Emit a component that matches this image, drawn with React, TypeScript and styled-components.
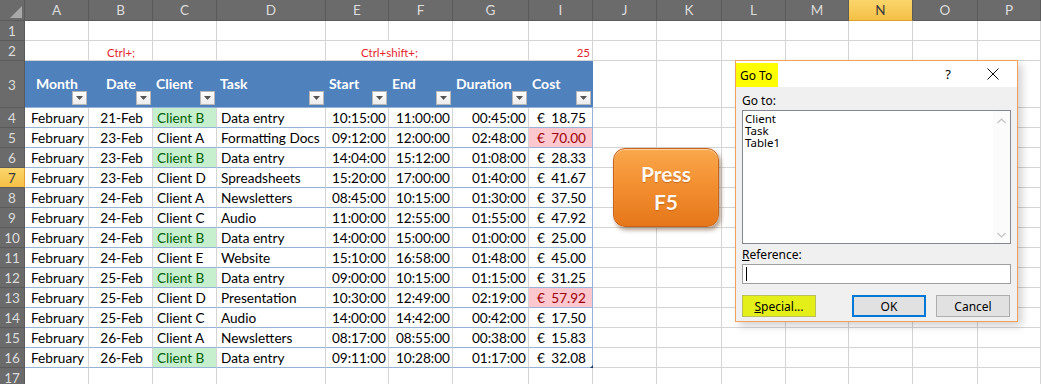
import styled, { createGlobalStyle } from "styled-components";

const GlobalStyle = createGlobalStyle`
  html, body {
    margin: 0;
    padding: 0;
    background: #ffffff;
  }
  * {
    box-sizing: border-box;
  }
`;

const GRID = "#d4d4d4";
const TABLE_LINE = "#95b3d7";
const TABLE_BLUE = "#4f81bd";

const COLS = ["A", "B", "C", "D", "E", "F", "G", "I", "J", "K", "L", "M", "N", "O", "P"];

type Row = {
  month: string;
  date: string;
  client: string;
  task: string;
  start: string;
  end: string;
  duration: string;
  cost: string;
  high?: boolean;
};

const rows: Row[] = [
  { month: "February", date: "21-Feb", client: "Client B", task: "Data entry", start: "10:15:00", end: "11:00:00", duration: "00:45:00", cost: "18.75" },
  { month: "February", date: "23-Feb", client: "Client A", task: "Formatting Docs", start: "09:12:00", end: "12:00:00", duration: "02:48:00", cost: "70.00", high: true },
  { month: "February", date: "23-Feb", client: "Client B", task: "Data entry", start: "14:04:00", end: "15:12:00", duration: "01:08:00", cost: "28.33" },
  { month: "February", date: "23-Feb", client: "Client D", task: "Spreadsheets", start: "15:20:00", end: "17:00:00", duration: "01:40:00", cost: "41.67" },
  { month: "February", date: "24-Feb", client: "Client A", task: "Newsletters", start: "08:45:00", end: "10:15:00", duration: "01:30:00", cost: "37.50" },
  { month: "February", date: "24-Feb", client: "Client C", task: "Audio", start: "11:00:00", end: "12:55:00", duration: "01:55:00", cost: "47.92" },
  { month: "February", date: "24-Feb", client: "Client B", task: "Data entry", start: "14:00:00", end: "15:00:00", duration: "01:00:00", cost: "25.00" },
  { month: "February", date: "24-Feb", client: "Client E", task: "Website", start: "15:10:00", end: "16:58:00", duration: "01:48:00", cost: "45.00" },
  { month: "February", date: "25-Feb", client: "Client B", task: "Data entry", start: "09:00:00", end: "10:15:00", duration: "01:15:00", cost: "31.25" },
  { month: "February", date: "25-Feb", client: "Client D", task: "Presentation", start: "10:30:00", end: "12:49:00", duration: "02:19:00", cost: "57.92", high: true },
  { month: "February", date: "25-Feb", client: "Client C", task: "Audio", start: "14:00:00", end: "14:42:00", duration: "00:42:00", cost: "17.50" },
  { month: "February", date: "26-Feb", client: "Client A", task: "Newsletters", start: "08:17:00", end: "08:55:00", duration: "00:38:00", cost: "15.83" },
  { month: "February", date: "26-Feb", client: "Client B", task: "Data entry", start: "09:11:00", end: "10:28:00", duration: "01:17:00", cost: "32.08" },
];

const headers = [
  { label: "Month", center: true },
  { label: "Date", center: true },
  { label: "Client" },
  { label: "Task" },
  { label: "Start" },
  { label: "End" },
  { label: "Duration" },
  { label: "Cost" },
];

export default function App() {
  return (
    <>
      <GlobalStyle />
      <Page>
        <Sheet>
          <Corner>
            <svg width="12" height="12" viewBox="0 0 12 12">
              <polygon points="12,0 12,12 0,12" fill="#a8a8a8" />
            </svg>
          </Corner>
          {COLS.map((c) => (
            <ColHead key={c} $active={c === "N"}>
              {c}
            </ColHead>
          ))}

          {/* row 1 */}
          <RowHead>1</RowHead>
          {COLS.map((c) => (
            <Cell key={"r1" + c} />
          ))}

          {/* row 2 */}
          <RowHead>2</RowHead>
          <Cell />
          <Cell $align="center">
            <Note>Ctrl+;</Note>
          </Cell>
          <Cell />
          <Cell />
          <Cell $align="center" $span={2}>
            <Note>Ctrl+shift+;</Note>
          </Cell>
          <Cell />
          <Cell $align="right">
            <Note>25</Note>
          </Cell>
          {COLS.slice(8).map((c) => (
            <Cell key={"r2" + c} />
          ))}

          {/* row 3: table header */}
          <RowHead>3</RowHead>
          {headers.map((h) => (
            <HeadCell key={h.label} $center={h.center}>
              <HeadLabel>{h.label}</HeadLabel>
              <FilterButton>
                <svg width="7" height="4" viewBox="0 0 7 4">
                  <polygon points="0,0 7,0 3.5,4" fill="#555" />
                </svg>
              </FilterButton>
            </HeadCell>
          ))}
          {COLS.slice(8).map((c) => (
            <Cell key={"r3" + c} />
          ))}

          {/* data rows */}
          {rows.map((r, i) => {
            const n = i + 4;
            const clientB = r.client === "Client B";
            return [
              <RowHead key={"h" + n} $active={n === 7}>
                {n}
              </RowHead>,
              <Cell key={"a" + n} $table $pl={6}>{r.month}</Cell>,
              <Cell key={"b" + n} $table $align="right" $pr={9}>{r.date}</Cell>,
              <Cell
                key={"c" + n}
                $table
                $pl={4}
                $fill={clientB ? "#c6efce" : undefined}
                $ink={clientB ? "#006100" : undefined}
              >
                {r.client}
              </Cell>,
              <Cell key={"d" + n} $table $pl={4}>{r.task}</Cell>,
              <Cell key={"e" + n} $table $align="right">{r.start}</Cell>,
              <Cell key={"f" + n} $table $align="right">{r.end}</Cell>,
              <Cell key={"g" + n} $table $align="right">{r.duration}</Cell>,
              <Cell
                key={"i" + n}
                $table
                $edge
                $pl={8}
                $pr={6}
                $fill={r.high ? "#ffc7ce" : undefined}
                $ink={r.high ? "#9c0006" : undefined}
              >
                <Money>
                  <span>€</span>
                  <span>{r.cost}</span>
                </Money>
                {n === 16 && <ResizeGrip />}
              </Cell>,
              ...COLS.slice(8).map((c) => <Cell key={c + n} />),
            ];
          })}

          {/* row 17 */}
          <RowHead>17</RowHead>
          {COLS.map((c) => (
            <Cell key={"r17" + c} />
          ))}
        </Sheet>

        <PressButton>
          Press
          <br />
          F5
        </PressButton>

        <Dialog>
          <TitleBar>
            <Title>Go To</Title>
            <TitleTools>
              <span>?</span>
              <svg width="12" height="12" viewBox="0 0 12 12">
                <path d="M0.5 0.5 L11.5 11.5 M11.5 0.5 L0.5 11.5" stroke="#111" strokeWidth="1" />
              </svg>
            </TitleTools>
          </TitleBar>
          <DialogBody>
            <FieldLabel>Go to:</FieldLabel>
            <ListBox>
              <ListItems>
                <ListItem>Client</ListItem>
                <ListItem>Task</ListItem>
                <ListItem>Table1</ListItem>
              </ListItems>
              <ScrollTrack>
                <svg width="9" height="6" viewBox="0 0 9 6">
                  <path d="M0.5 5 L4.5 1 L8.5 5" stroke="#c2c2c2" strokeWidth="1.2" fill="none" />
                </svg>
                <svg width="9" height="6" viewBox="0 0 9 6">
                  <path d="M0.5 1 L4.5 5 L8.5 1" stroke="#c2c2c2" strokeWidth="1.2" fill="none" />
                </svg>
              </ScrollTrack>
            </ListBox>
            <FieldLabel $gap>
              <u>R</u>eference:
            </FieldLabel>
            <TextInput>
              <Caret />
            </TextInput>
            <ButtonRow>
              <DialogButton $variant="special">
                <u>S</u>pecial...
              </DialogButton>
              <RightButtons>
                <DialogButton $variant="primary">OK</DialogButton>
                <DialogButton>Cancel</DialogButton>
              </RightButtons>
            </ButtonRow>
          </DialogBody>
        </Dialog>
      </Page>
    </>
  );
}

const Page = styled.div`
  position: relative;
  width: 1041px;
  height: 384px;
  overflow: hidden;
  background: #ffffff;
  font-family: Lato, "Liberation Sans", sans-serif;
`;

const Sheet = styled.div`
  display: grid;
  grid-template-columns: 25px 64px 64px 64px 109px 63px 64px 76px 64px 64px 65px 64px 63px 64px 65px 1fr;
  grid-template-rows: 21px 20px 20px 47px repeat(14, 20px);
  width: 1041px;
`;

const Corner = styled.div`
  background: #6b6b6b;
  border-right: 1px solid #5a5a5a;
  border-bottom: 1px solid #5a5a5a;
  display: flex;
  align-items: flex-end;
  justify-content: flex-end;
  padding: 0 2px 2px 0;
`;

const ColHead = styled.div<{ $active?: boolean }>`
  display: flex;
  align-items: center;
  justify-content: center;
  font-size: 13.5px;
  color: ${(p) => (p.$active ? "#3a3a3a" : "#dcdcdc")};
  background: ${(p) => (p.$active ? "linear-gradient(#fbd56b, #f4c046)" : "#6b6b6b")};
  border-right: 1px solid #5a5a5a;
  border-bottom: 1px solid ${(p) => (p.$active ? "#e0a030" : "#5a5a5a")};
`;

const RowHead = styled.div<{ $active?: boolean }>`
  display: flex;
  align-items: center;
  justify-content: center;
  padding-top: 1px;
  font-size: 13.5px;
  color: ${(p) => (p.$active ? "#3a3a3a" : "#dcdcdc")};
  background: ${(p) => (p.$active ? "linear-gradient(#fbd56b, #f4c046)" : "#6b6b6b")};
  border-right: 1px solid ${(p) => (p.$active ? "#e0a030" : "#5a5a5a")};
  border-bottom: 1px solid #5a5a5a;
`;

const Cell = styled.div<{
  $align?: "left" | "right" | "center";
  $fill?: string;
  $ink?: string;
  $table?: boolean;
  $edge?: boolean;
  $span?: number;
  $pl?: number;
  $pr?: number;
}>`
  position: relative;
  display: flex;
  align-items: center;
  justify-content: ${(p) =>
    p.$align === "right" ? "flex-end" : p.$align === "center" ? "center" : "flex-start"};
  grid-column: ${(p) => (p.$span ? `span ${p.$span}` : "auto")};
  padding: 1px ${(p) => p.$pr ?? 2}px 0 ${(p) => p.$pl ?? 3}px;
  font-size: 13.6px;
  white-space: nowrap;
  color: ${(p) => p.$ink || "#000"};
  background: ${(p) => p.$fill || "#fff"};
  border-right: 1px solid ${(p) => (p.$edge ? TABLE_LINE : GRID)};
  border-bottom: 1px solid ${(p) => (p.$table ? TABLE_LINE : GRID)};
`;

const Note = styled.span`
  font-size: 11.5px;
  color: #e3262b;
  padding-top: 2px;
`;

const HeadCell = styled.div<{ $center?: boolean }>`
  position: relative;
  display: flex;
  align-items: center;
  justify-content: ${(p) => (p.$center ? "center" : "flex-start")};
  padding: 0 3px 2px 3px;
  background: ${TABLE_BLUE};
  border-bottom: 1px solid ${TABLE_LINE};
`;

const HeadLabel = styled.span`
  font-size: 14px;
  font-weight: 700;
  color: #ffffff;
  white-space: nowrap;
`;

const FilterButton = styled.div`
  position: absolute;
  right: 2px;
  bottom: 2px;
  width: 15px;
  height: 14px;
  display: flex;
  align-items: center;
  justify-content: center;
  background: linear-gradient(#ffffff, #ececec);
  border: 1px solid #b8b8b8;
`;

const Money = styled.div`
  display: flex;
  justify-content: space-between;
  width: 100%;
`;

const ResizeGrip = styled.div`
  position: absolute;
  right: -2px;
  bottom: -2px;
  width: 0;
  height: 0;
  border-left: 5px solid transparent;
  border-bottom: 5px solid #1f3864;
`;

const PressButton = styled.div`
  position: absolute;
  left: 613px;
  top: 148px;
  width: 106px;
  height: 79px;
  display: flex;
  align-items: center;
  justify-content: center;
  text-align: center;
  font-family: Lato, "Liberation Sans", sans-serif;
  font-weight: 700;
  font-size: 21px;
  line-height: 28px;
  color: #fff8ee;
  background: linear-gradient(#f9a84c 0%, #f39032 45%, #e57719 100%);
  border: 1px solid #c8631a;
  border-radius: 12px;
  box-shadow: 2px 3px 4px rgba(80, 40, 0, 0.45), inset 0 1px 1px rgba(255, 255, 255, 0.5);
  text-shadow: 0 1px 1px rgba(120, 50, 0, 0.35);
`;

const Dialog = styled.div`
  position: absolute;
  left: 735px;
  top: 60px;
  width: 283px;
  height: 262px;
  display: flex;
  flex-direction: column;
  border: 1px solid #f0a15a;
  background: #f0f0f0;
  box-shadow: 4px 4px 8px rgba(0, 0, 0, 0.18);
  font-family: "Noto Sans", "Open Sans", sans-serif;
  font-size: 12px;
  color: #000;
`;

const TitleBar = styled.div`
  height: 26px;
  display: flex;
  align-items: center;
  justify-content: space-between;
  background: #ffffff;
`;

const Title = styled.div`
  height: 24px;
  display: flex;
  align-items: center;
  margin-top: 2px;
  padding: 0 6px 0 4px;
  background: #ffff00;
  font-size: 12px;
`;

const TitleTools = styled.div`
  display: flex;
  align-items: center;
  gap: 36px;
  padding-right: 18px;
  font-size: 13px;
`;

const DialogBody = styled.div`
  flex: 1;
  display: flex;
  flex-direction: column;
  padding: 6px 6px 0 6px;
`;

const FieldLabel = styled.div<{ $gap?: boolean }>`
  height: 16px;
  line-height: 16px;
  margin-top: ${(p) => (p.$gap ? "3px" : "0")};
  margin-bottom: 1px;
`;

const ListBox = styled.div`
  height: 134px;
  display: flex;
  border: 1px solid #828790;
  background: #ffffff;
`;

const ListItems = styled.div`
  flex: 1;
  padding: 2px 2px;
`;

const ListItem = styled.div`
  height: 12px;
  line-height: 12px;
  font-size: 11.5px;
`;

const ScrollTrack = styled.div`
  width: 17px;
  display: flex;
  flex-direction: column;
  justify-content: space-between;
  align-items: center;
  padding: 7px 0 5px 0;
  background: #fbfbfb;
`;

const TextInput = styled.div`
  height: 20px;
  display: flex;
  align-items: center;
  padding-left: 3px;
  border: 1px solid #a0a0a0;
  background: #ffffff;
`;

const Caret = styled.div`
  width: 1px;
  height: 14px;
  background: #000;
`;

const ButtonRow = styled.div`
  display: flex;
  justify-content: space-between;
  margin-top: 11px;
`;

const RightButtons = styled.div`
  display: flex;
  gap: 10px;
  padding-right: 1px;
`;

const DialogButton = styled.div<{ $variant?: "special" | "primary" }>`
  width: 74px;
  height: 22px;
  display: flex;
  align-items: center;
  justify-content: center;
  font-size: 12px;
  background: ${(p) => (p.$variant === "special" ? "#e4ef1a" : "#e1e1e1")};
  border: ${(p) =>
    p.$variant === "primary" ? "2px solid #0078d7" : p.$variant === "special" ? "1px solid #b9c05a" : "1px solid #adadad"};
`;
